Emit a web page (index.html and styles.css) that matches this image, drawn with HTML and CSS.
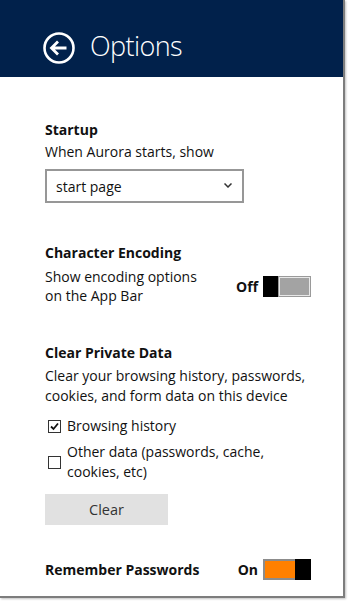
FILE: index.html
```html
<!DOCTYPE html>
<html>
<head>
<meta charset="utf-8">
<link rel="stylesheet" href="styles.css">
</head>
<body>
<div class="window">
  <header class="header">
    <svg class="back" width="32" height="32" viewBox="0 0 32 32">
      <circle cx="16" cy="16" r="14.5" fill="none" stroke="#fff" stroke-width="2.6"/>
      <path d="M8.5 16 H23.5 M15 9.5 L8.5 16 L15 22.5" fill="none" stroke="#fff" stroke-width="2.8" stroke-linejoin="miter"/>
    </svg>
    <h1 class="title">Options</h1>
  </header>
  <main class="content">
    <section class="group startup">
      <h2 class="heading">Startup</h2>
      <p class="text">When Aurora starts, show</p>
      <div class="select">
        <span>start page</span>
        <svg class="chev" width="8" height="5" viewBox="0 0 8 5"><path d="M0.5 0.5 L4 4 L7.5 0.5" fill="none" stroke="#333" stroke-width="1.5"/></svg>
      </div>
    </section>
    <section class="group encoding">
      <h2 class="heading">Character Encoding</h2>
      <div class="row">
        <p class="text">Show encoding options<br>on the App Bar</p>
        <div class="switch">
          <span class="state">Off</span>
          <span class="toggle off"><span class="thumb"></span><span class="track"></span></span>
        </div>
      </div>
    </section>
    <section class="group private">
      <h2 class="heading">Clear Private Data</h2>
      <p class="text">Clear your browsing history, passwords,<br>cookies, and form data on this device</p>
      <label class="check first">
        <span class="box"><svg width="11" height="11" viewBox="0 0 11 11"><path d="M2 5.5 L4.5 8 L9 2.5" fill="none" stroke="#111" stroke-width="1.8"/></svg></span>
        <span class="text">Browsing history</span>
      </label>
      <label class="check second">
        <span class="box"></span>
        <span class="text">Other data (passwords, cache,<br>cookies, etc)</span>
      </label>
      <button class="btn">Clear</button>
    </section>
    <section class="group passwords">
      <div class="row center">
        <h2 class="heading">Remember Passwords</h2>
        <div class="switch">
          <span class="state">On</span>
          <span class="toggle on"><span class="track"></span><span class="thumb"></span></span>
        </div>
      </div>
    </section>
  </main>
</div>
</body>
</html>
```
FILE: styles.css
```css
* { box-sizing: border-box; }
html, body { margin: 0; padding: 0; background: #fff; }
body {
  font-family: "Open Sans", "Noto Sans", sans-serif;
  color: #111;
  width: 348px;
  height: 601px;
  overflow: hidden;
}
.window {
  width: 345px;
  height: 598px;
  background: #fff;
  border-right: 2px solid #7d7d7d;
  border-bottom: 2px solid #7d7d7d;
  box-shadow: 1px 1px 2px rgba(0,0,0,0.25);
  overflow: hidden;
}
.header {
  height: 77px;
  background: #01214b;
  display: flex;
  align-items: center;
  padding-left: 43px;
  padding-top: 19px;
}
.back { display: block; }
.title {
  margin: 0 0 0 15px;
  font-family: "Open Sans", "Noto Sans", sans-serif;
  font-weight: 300;
  font-size: 27px;
  letter-spacing: -0.6px;
  color: #fff;
  line-height: 32px;
  position: relative;
  top: -2px;
}
.content {
  padding: 43px 32px 0 45px;
}
.group { margin: 0; }
.heading {
  margin: 0;
  font-size: 14px;
  font-weight: 700;
  line-height: 20px;
}
.text {
  margin: 0;
  font-size: 14px;
  line-height: 20px;
  white-space: nowrap;
}
.startup .text { margin-top: 2px; }
.select {
  margin-top: 7px;
  width: 199px;
  height: 34px;
  border: 2px solid #979797;
  display: flex;
  align-items: center;
  justify-content: space-between;
  padding: 0 10px 0 9px;
  font-size: 14px;
}
.chev { display: block; margin-top: -1px; }
.encoding { margin-top: 40px; }
.row {
  display: flex;
  align-items: center;
  justify-content: space-between;
}
.encoding .row { margin-top: 4px; }
.encoding .text { line-height: 19px; }
.switch {
  display: flex;
  align-items: center;
}
.state {
  font-size: 14px;
  font-weight: 700;
  margin-right: 5px;
}
.toggle {
  display: flex;
  width: 48px;
  height: 21px;
}
.toggle.off .thumb { width: 15px; background: #000; }
.toggle.off .track {
  flex: 1;
  background: #a3a3a3;
  border: 1px solid #9a9a9a;
  box-shadow: inset 0 0 0 1px #e8e8e8;
}
.toggle.on .track {
  flex: 1;
  background: #ff8000;
  border: 2px solid #8c8c8c;
  border-right: none;
}
.toggle.on .thumb { width: 16px; background: #000; }
.private { margin-top: 38px; }
.private > .text { margin-top: 3px; }
.check {
  display: flex;
  align-items: center;
}
.check .box {
  width: 13px;
  height: 13px;
  border: 1px solid #333;
  margin: 0 6px 0 3px;
  display: flex;
  align-items: center;
  justify-content: center;
  flex: none;
}
.check .box svg { display: block; }
.check.first { margin-top: 10px; }
.check.second { margin-top: 6px; }
.btn {
  margin-top: 12px;
  width: 123px;
  height: 31px;
  border: none;
  background: #e1e1e1;
  color: #333;
  font-family: "Open Sans", "Noto Sans", sans-serif;
  font-size: 14.5px;
  padding: 0;
  display: block;
}
.passwords { margin-top: 34px; }
```
